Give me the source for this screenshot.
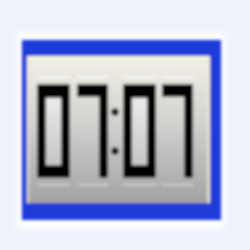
import React from "react";

// one digit "0" of the segment display: outer box with a lit hole
function Zero({ x }: { x: number }) {
  return (
    <g>
      <rect x={x} y={84} width={33} height={94} rx={2} fill="#060606" />
      <rect x={x + 9} y={98} width={15} height={67} fill="url(#hole)" />
    </g>
  );
}

function Seven({ x }: { x: number }) {
  return (
    <g fill="#060606">
      <rect x={x} y={84} width={31} height={13} />
      <rect x={x + 22} y={84} width={9} height={94} rx={3} />
    </g>
  );
}

export default function App() {
  return (
    <div className="w-[250px] h-[250px] bg-[#eef2fb] overflow-hidden">
      <svg
        width="250"
        height="250"
        viewBox="0 0 250 250"
        role="img"
        aria-label="07:07"
        className="block"
      >
        <defs>
          <filter id="soft" x="-10%" y="-10%" width="120%" height="120%">
            <feGaussianBlur stdDeviation="1.4" />
          </filter>
          <filter id="halo" x="-10%" y="-10%" width="120%" height="120%">
            <feGaussianBlur stdDeviation="3" />
          </filter>
          <linearGradient id="face" x1="0" y1="0" x2="0" y2="1">
            <stop offset="0" stopColor="#f1efe6" />
            <stop offset="0.45" stopColor="#d2d2d0" />
            <stop offset="1" stopColor="#a2a2a2" />
          </linearGradient>
          <linearGradient id="hole" x1="0" y1="0" x2="0" y2="1">
            <stop offset="0" stopColor="#ebebe9" />
            <stop offset="1" stopColor="#c6c6c6" />
          </linearGradient>
        </defs>

        <rect x="17" y="33" width="208" height="196" fill="#ffffff" filter="url(#halo)" />

        <g filter="url(#soft)">
          <rect x="22" y="40" width="199" height="180" fill="#1c3ad8" />
          <rect x="27" y="56" width="183" height="147" fill="url(#face)" />
          <rect x="27" y="56" width="183" height="3" fill="#f6f4de" />
          <rect x="207" y="56" width="3" height="147" fill="#ecebd6" opacity="0.8" />
          <rect x="27" y="56" width="2" height="147" fill="#efeedc" opacity="0.7" />

          <g fill="#ffffff" opacity="0.75">
            <rect x="38" y="76" width="32" height="2" />
            <rect x="77" y="76" width="31" height="2" />
            <rect x="123" y="76" width="34" height="2" />
            <rect x="162" y="76" width="31" height="2" />
            <rect x="38" y="184" width="32" height="2" opacity="0.5" />
            <rect x="77" y="184" width="31" height="2" opacity="0.5" />
            <rect x="123" y="184" width="34" height="2" opacity="0.5" />
            <rect x="162" y="184" width="31" height="2" opacity="0.5" />
          </g>

          <Zero x={37} />
          <Seven x={77} />
          <circle cx="115" cy="112" r="3.7" fill="#060606" />
          <circle cx="115" cy="151" r="3.7" fill="#060606" />
          <Zero x={123} />
          <Seven x={162} />
        </g>
      </svg>
    </div>
  );
}
